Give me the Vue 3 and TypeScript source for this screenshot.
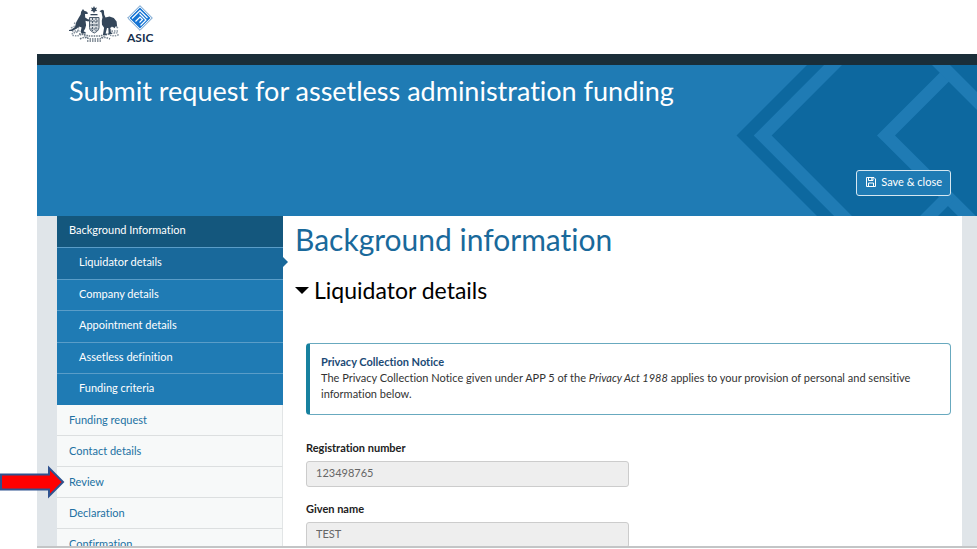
<script setup lang="ts">
import { ref } from 'vue'

const subItems: string[] = [
  'Liquidator details',
  'Company details',
  'Appointment details',
  'Assetless definition',
  'Funding criteria',
]
const steps: string[] = ['Funding request', 'Contact details', 'Review', 'Declaration', 'Confirmation']
const active = ref('Liquidator details')
const open = ref(true)
const fields = [
  { id: 'registration-number', label: 'Registration number', value: '123498765' },
  { id: 'given-name', label: 'Given name', value: 'TEST' },
]
</script>

<template>
  <div class="page">
    <div class="app">
      <header class="brand">
        <svg class="crest" viewBox="0 0 52 38" aria-label="Australian Government coat of arms">
          <g fill="none" stroke="#8995a1" stroke-width="1.500" stroke-dasharray="1.500 1">
            <path d="M2 23q5-3 7-1t-2 6q-4-1-4 2 5 2 10-1l6 4M49 23q-4-3-7-1t3 6q4-1 4 2-5 2-10-1l-7 4M5 18q3 1 5 4M46 18q-3 2-4 4M3 26h8M40 26h9" />
            <path d="M10 29q6 0 9 2h13q3-2 9-2M11 34q5-3 9 0h11q4-3 10 0M18 36h14" stroke="#66737f" />
          </g>
          <g fill="#34465a">
            <path d="M25 1l1 2 2-.6-1 2 1.200 1.500-2.200.3-1 2-1-2-2.200-.3L23 4.400l-1-2 2 .6z" />
            <path d="M21.500 9h7v1.300h-7z" />
            <path d="M14 4l1.200 1.700 2.300.8 1.500 1.400-.6 1-2.400.2.2 3.500 3 1.800 2.500-.7.300 1-2.800 1.800-2.700-.8.600 4.500-1 3.500-1.500 2.600 2.200 1.200v1h-4.200l-1-1.700 1-4.200-2.600-1.200-2.500 2.300-4.500 2.200-4.300.3v-1l3.700-.8 3.600-2.500 1.200-4.700 2.500-4.500 2-3.200.4-2.800z" />
            <path d="M30.500 6.200l2.600-1.400 1.800.8.300 3.800 1.300 3.200 4-1.100 4.300 1.400 2.800 3.600.6 5.500-1.600-1-1 2.200-2.300-1.800-2.200 1.200.6 4.200 2 2.200-4 .1-.4-6-1.300-.2-1.400 5.600 1.500 1.500-4.200.1 1.200-7.400-2.100-3-.2-4 .7-3.500-1-4.800z" />
          </g>
          <path d="M20.500 12.500h9.500v10c0 3-2.800 4.500-4.700 5.500-2-1-4.800-2.500-4.800-5.500z" fill="#d5dadf" stroke="#4c5c6d" />
          <path d="M21 16h8.500M21 20h8.500M21.500 24h7M23.500 13v13M27 13v13" fill="none" stroke="#4c5c6d" stroke-dasharray="2 1" />
        </svg>
        <div class="asic">
          <svg viewBox="0 0 26 26" aria-hidden="true">
            <path d="M13 .7 25.300 13 13 25.300.7 13z" fill="#fff" stroke="#3a7cba" stroke-width=".8" />
            <path d="M13 2.500 23.500 13 13 23.500 2.500 13z" fill="#1474d4" />
            <path d="M5 13.500l8-8 7.500 7.500M8.500 16.500l4.500-4.500 2.500 2.500-3 3M12.500 8.500l6.500 6.500-5.500 5.500" fill="none" stroke="#fff" stroke-width="1.200" />
          </svg>
          <span>ASIC</span>
        </div>
      </header>

      <div class="bar"></div>

      <section class="banner">
        <svg class="pattern" viewBox="0 0 241 151" aria-hidden="true">
          <path d="M71 0h170v151H81L.5 70.500z" fill="#0d689f" />
          <g fill="none" stroke="#1f7bb4" stroke-width="12.700">
            <path d="M107 -10 26.700 70.500 117 161" />
            <path d="M212.500 8 150 70.500 241 161" />
            <path d="M195 -10 251 46" />
            <path d="M183 161 213 131" />
          </g>
        </svg>
        <h1>Submit request for assetless administration funding</h1>
        <button class="save" type="button">
          <svg viewBox="0 0 12 12" aria-hidden="true">
            <path d="M1.500 1.500h7.500l1.500 1.500v7.500h-9zM3.500 1.500v3h4.500v-3M3.500 10.500v-3.500h5v3.500M6.800 2v2" fill="none" stroke="#fff" />
          </svg>
          Save &amp; close
        </button>
      </section>

      <div class="body">
        <nav class="side" aria-label="Form sections">
          <a class="head" href="#background">Background Information</a>
          <div class="subs">
            <a
              v-for="item in subItems"
              :key="item"
              href="#background"
              :class="{ active: item === active }"
              @click.prevent="active = item"
              >{{ item }}</a
            >
          </div>
          <a v-for="step in steps" :key="step" class="step" href="#step">{{ step }}</a>
        </nav>

        <main class="content">
          <h2>Background information</h2>
          <h3>
            <button class="toggle" type="button" :aria-expanded="open" @click="open = !open">
              <svg viewBox="0 0 14 8" aria-hidden="true"><path d="M0 1h14L7 8z" /></svg>
              Liquidator details
            </button>
          </h3>
          <div v-show="open" class="details">
            <aside class="notice">
              <strong>Privacy Collection Notice</strong>
              <p>
                The Privacy Collection Notice given under APP 5 of the <em>Privacy Act 1988</em> applies to your
                provision of personal and sensitive information below.
              </p>
            </aside>
            <div v-for="field in fields" :key="field.id" class="field">
              <label :for="field.id">{{ field.label }}</label>
              <input :id="field.id" type="text" :value="field.value" readonly />
            </div>
          </div>
        </main>
      </div>
    </div>

    <svg class="pointer" viewBox="0 0 65 34" aria-hidden="true">
      <path d="M1 9.500h48V3l14 14-14 14v-6.500H1z" fill="#f00" stroke="#2f528f" stroke-width="2" />
    </svg>
  </div>
</template>

<style>
body {
  background: #fff;
}
</style>

<style scoped>
.page {
  position: relative;
  box-sizing: border-box;
  height: 100vh;
  padding: 0 0 1px 37px;
  overflow: hidden;
  font-family: Lato, 'Liberation Sans', sans-serif;
  font-size: 11px;
  font-variant-ligatures: none;
  line-height: 16px;
  color: #333;
}
.app {
  display: flex;
  flex-direction: column;
  box-sizing: border-box;
  height: 100%;
  overflow: hidden;
  border-bottom: 2px solid #c3c5c6;
}
.brand {
  display: flex;
  flex: none;
  gap: 6px;
  box-sizing: border-box;
  height: 54px;
  padding: 5px 32px 0;
}
.crest {
  width: 52px;
  height: 38px;
}
.asic {
  display: flex;
  flex-direction: column;
  align-items: center;
  font-size: 12px;
  font-weight: 700;
  line-height: 14px;
  color: #17304d;
}
.asic svg {
  width: 26px;
  height: 26px;
}
.bar {
  flex: none;
  height: 11px;
  background: #1a2e39;
}
.banner {
  position: relative;
  display: flex;
  flex: none;
  flex-direction: column;
  justify-content: space-between;
  align-items: flex-start;
  box-sizing: border-box;
  height: 151px;
  padding: 8px 26px 20px 32px;
  background: #1f7bb4;
}
.pattern {
  position: absolute;
  top: 0;
  right: 0;
  height: 100%;
}
h1,
h2,
h3,
p {
  margin: 0;
  font-weight: 400;
}
h1 {
  position: relative;
  font-size: 27px;
  line-height: 36px;
  color: #fff;
}
.save {
  position: relative;
  display: flex;
  gap: 4px;
  align-items: center;
  align-self: flex-end;
  height: 26px;
  padding: 0 8px 2px;
  font: inherit;
  color: #fff;
  background: #1f7bb4;
  border: 1px solid #d6e7f1;
  border-radius: 3px;
}
.save svg {
  width: 12px;
  height: 12px;
}
.body {
  display: flex;
  flex: 1;
  align-items: stretch;
  min-height: 0;
  padding: 0 15px 0 20px;
  background: #e0e5e9;
}
.side {
  flex: none;
  width: 226px;
}
.side a {
  display: block;
  box-sizing: border-box;
  padding: 6px 12px 0;
  color: #2271a3;
  text-decoration: none;
}
.side .head {
  height: 31px;
  color: #fff;
  background: #14577d;
}
.subs {
  display: grid;
  grid-template-rows: repeat(5, 1fr);
  height: 158px;
  background: #1f7bb4;
}
.side .subs a {
  position: relative;
  padding-left: 22px;
  color: #fff;
  border-top: 1px solid #5a9dc8;
}
.side .subs .active {
  background: #19699b;
}
.subs .active::after {
  position: absolute;
  top: 9px;
  left: 100%;
  content: '';
  border: 5px solid transparent;
  border-left-color: #19699b;
  border-right: 0;
}
.side .step {
  height: 31px;
  padding-top: 7px;
  background: #f7f9f9;
  border-right: 1px solid #e2e5e6;
  border-bottom: 1px solid #dcdfe0;
}
.side .step:first-of-type {
  border-top: 1px solid #dcdfe0;
}
.content {
  flex: 1;
  min-width: 0;
  padding: 3px 11px 0 12px;
  background: #fff;
}
h2 {
  font-size: 30px;
  line-height: 40px;
  color: #19699b;
}
h3 {
  margin-top: 15px;
}
.toggle {
  display: flex;
  gap: 5px;
  align-items: center;
  padding: 0;
  font: inherit;
  font-size: 23px;
  line-height: 32px;
  color: #000;
  background: none;
  border: 0;
}
.toggle svg {
  width: 14px;
  height: 8px;
}
.details {
  padding: 37px 0 0 11px;
}
.notice {
  box-sizing: border-box;
  height: 72px;
  padding: 10px 20px 0 11px;
  border: 1px solid #68a9bf;
  border-left: 4px solid #17819f;
  border-radius: 4px;
}
.notice strong {
  color: #1b4a75;
}
.field {
  display: flex;
  flex-direction: column;
  gap: 5px;
  margin-bottom: 14px;
}
.notice + .field {
  margin-top: 25px;
}
.field label {
  font-weight: 700;
  color: #222;
}
.field input {
  box-sizing: border-box;
  width: 50%;
  height: 26px;
  padding: 0 9px 3px;
  font: inherit;
  color: #666;
  background: #eee;
  border: 1px solid #ccc;
  border-radius: 3px;
}
.pointer {
  position: absolute;
  top: 465px;
  left: 0;
  width: 65px;
  height: 34px;
}
</style>
